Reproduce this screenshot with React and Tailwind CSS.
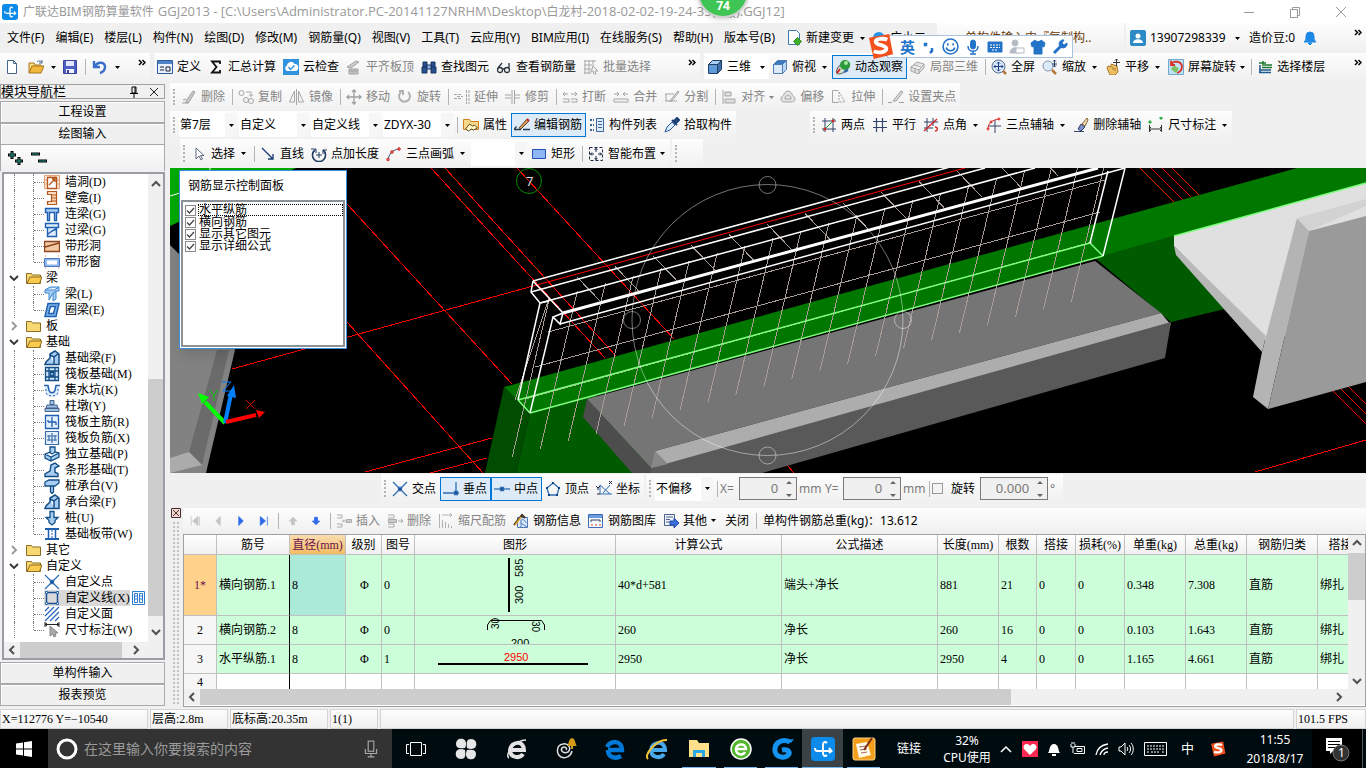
import { Fragment } from "react";

const strip = "bg-linear-to-b from-[#fdfdfd] to-[#f0f0f0]";

function Svg({ children, className = "h-4 w-4", box = "0 0 16 16" }) {
  return (
    <svg viewBox={box} className={`shrink-0 ${className}`} fill="none" stroke="currentColor" aria-hidden="true">
      {children}
    </svg>
  );
}

/* ---------- toolbar icons ---------- */

const icons = {
  newFile: <path d="M3.500 1.500h6l3 3v10h-9zM9.500 1.500v3h3" fill="#fff" stroke="#44648c" />,
  open: (
    <g stroke="#a9741c">
      <path d="M1 14V4h5l1 2h6v2" fill="#f8dd84" />
      <path d="M1 14l3-7h12l-3 7z" fill="#f2b93f" />
      <path d="M9 3c2-2 4-1 5 1M14 1v3h-3" stroke="#44648c" />
    </g>
  ),
  save: (
    <g>
      <path d="M1.500 1.500h13v13h-13z" fill="#4d5fc0" stroke="#38429b" />
      <path d="M4 2h8v5H4z" fill="#dfe6fb" stroke="none" />
      <path d="M4 10h8v4H4z" fill="#f4f4ff" stroke="none" />
      <path d="M5 11h2v3H5z" fill="#38429b" stroke="none" />
    </g>
  ),
  undo: <path d="M2 2v6h6M3 7c3-5 10-4 10 1 0 3-2 5-5 6" stroke="#3a6fc9" strokeWidth="2.400" />,
  define: (
    <g>
      <path d="M.5 1.500h15v13H.5z" fill="#e8f0fb" stroke="#2e5c9e" />
      <path d="M1 2h14v3H1z" fill="#4f82c8" stroke="none" />
      <path d="M3 8h4M3 11h4M9 8h4v4H9z" stroke="#223" />
    </g>
  ),
  sigma: <path d="M12 5V2.500H4L8.500 8 4 13.500h8V11" stroke="#111" strokeWidth="1.800" />,
  cloud: (
    <g>
      <path d="M0 0h16v16H0z" fill="#2f93dd" stroke="none" />
      <path d="M4 12a3 3 0 010-5.500A4 4 0 0111.500 5 3.500 3.500 0 0112 12z" fill="#fff" stroke="none" />
      <path d="M5.500 8l2 2.500 4-4" stroke="#2f93dd" strokeWidth="1.500" />
    </g>
  ),
  slab: <path d="M1 8l9-6 3 1-8 6zM3 10h9v5H3zM6 10v5M9 10v5M3 12h9" fill="#ccc" stroke="#a3a3a3" />,
  find: (
    <g fill="#28508f" stroke="#18355f">
      <path d="M2 3h4v5H2zM10 3h4v5h-4z" />
      <path d="M1 8h5v6H1zM10 8h5v6h-5z" />
      <path d="M6 6h4v4H6z" fill="#8db5e8" />
    </g>
  ),
  glasses: (
    <g stroke="#2a3542" strokeWidth="1.300">
      <circle cx="4" cy="11" r="2.500" />
      <circle cx="11" cy="11" r="2.500" />
      <path d="M6 10h3M2 9l4-5M13 10V4" />
    </g>
  ),
  batch: (
    <g stroke="#a8a8a8">
      <path d="M1 2h12M1 6h8M1 10h7M1 14h7M2 1v14M6 1v14M10 1v6" />
      <path d="M10 7l5 5h-3l1 3-2 0-1-3-2 1z" fill="#eee" />
    </g>
  ),
  cube: (
    <g stroke="#1f3c63">
      <path d="M1.500 5.500h9v9h-9z" fill="#5f9bd8" />
      <path d="M1.500 5.500l4-4h9l-4 4z" fill="#a9cdf0" />
      <path d="M10.500 14.500l4-4v-9l-4 4z" fill="#3c6ea8" />
    </g>
  ),
  topView: (
    <g stroke="#4d7db3">
      <path d="M1.500 5.500h9v9h-9z" fill="#dbe9f8" />
      <path d="M1.500 5.500l4-4h9l-4 4z" fill="#3d79bf" />
      <path d="M10.500 14.500l4-4v-9l-4 4z" fill="#b9d5f1" />
    </g>
  ),
  orbit: (
    <g>
      <ellipse cx="8" cy="9" rx="8" ry="4" transform="rotate(-40 8 9)" fill="#cfe2cf" stroke="#667" />
      <circle cx="10" cy="6" r="5" fill="#2c9a3c" stroke="none" />
      <circle cx="11" cy="4" r="2" fill="#a5e89a" stroke="none" />
      <path d="M2 14l3-4" stroke="#d22" strokeWidth="2" />
      <path d="M9 13l4-2" stroke="#2a60b0" strokeWidth="2" />
    </g>
  ),
  localCube: (
    <g stroke="#a5a5a5" fill="#e2e2e2">
      <path d="M1 8l6-5 7 2-5 6zM1 8v4l7 3 6-6V5M9 11v4M4 6l7 2M5 9v4" />
    </g>
  ),
  full: (
    <g>
      <circle cx="7.500" cy="7.500" r="6.500" fill="#d7e6f8" stroke="#5a6f8c" />
      <path d="M7.500 3v9M3 7.500h9M6 4.500L7.500 3 9 4.500M6 10.500L7.500 12 9 10.500M4.500 6L3 7.500 4.500 9M10.500 6L12 7.500 10.500 9" stroke="#1d3f8c" />
      <path d="M12 12l3 3" stroke="#b4793a" strokeWidth="2.500" />
    </g>
  ),
  zoom: (
    <g>
      <circle cx="6" cy="7" r="5" fill="#dcebf9" stroke="#8796a8" />
      <path d="M10 11l4 4" stroke="#b4793a" strokeWidth="2.500" />
      <path d="M12.500 1v7M11 2.500L12.500 1 14 2.500M10 5h5M11 6.500L12.500 8 14 6.500" stroke="#223a66" />
    </g>
  ),
  pan: (
    <g>
      <path d="M2 9l1-2 3 1V5l6 2 1 6-3 3H5z" fill="#edbe62" stroke="#a67a2c" />
      <path d="M11.500 0v7M8 3.500h7M10 1.500L11.500 0 13 1.500" stroke="#333" />
      <path d="M8 8v3M10 9v3" stroke="#a67a2c" />
    </g>
  ),
  rotateScreen: (
    <g>
      <path d="M.5.5h15v15H.5z" fill="#bfe2f5" stroke="#6fa8cc" />
      <path d="M3 10l3-4 5 4-3 4z" fill="#7cc35f" stroke="none" />
      <path d="M3 6c2-5 10-4 11 1 0 3-1 6-5 7M3 1.500V6h4" stroke="#d9342b" strokeWidth="1.800" />
    </g>
  ),
  floors: (
    <g strokeWidth="1.500">
      <path d="M2 4h7M6 2v3" stroke="#1c7a32" />
      <path d="M5 6h10M5 8.500h10" stroke="#1c7a32" />
      <path d="M2 11h12M2 13.500h12M3 6v8" stroke="#225a8c" />
    </g>
  ),
  brush: <path d="M1 14h7M5 12l7-10 2 1-6 10-3 1zM2 11l3-1" fill="#c9c9c9" stroke="#a0a0a0" />,
  copy: (
    <g stroke="#a5a5a5">
      <circle cx="3.500" cy="4" r="2.500" />
      <circle cx="8" cy="11" r="2.500" />
      <circle cx="13" cy="12" r="2.500" />
      <path d="M8 3h5v4M11 5.500l2 2 2-2" />
    </g>
  ),
  mirror: <path d="M5.500 2v11H.5zM9.500 2v11h5zM7.500 0v16" stroke="#a5a5a5" />,
  move: <path d="M8 1v14M1 8h14M6 3l2-2 2 2M6 13l2 2 2-2M3 6L1 8l2 2M13 6l2 2-2 2" stroke="#a0a0a0" strokeWidth="1.300" />,
  rotate: <path d="M4 3a5.500 5.500 0 107 0M2 2h4v4" stroke="#b0b0b0" strokeWidth="2" />,
  extend: <path d="M0 5.500h8M0 9.500h8M3 7.500h6M12.500 1v14M15 1v14" stroke="#a5a5a5" strokeDasharray="3 1" />,
  trim: <path d="M0 6h6M0 9h6M7 1v14M9.500 1v14M10 6h5M10 9h5" stroke="#a5a5a5" />,
  split: <path d="M1 5h5M9 5h6M3 3L1 5l2 2M13 3l2 2-2 2M1 10h6v3H1M9 10h6v3H9" stroke="#a5a5a5" />,
  merge: <path d="M1 5h5M10 5h5M4 3l2 2-2 2M12 3l-2 2 2 2M1 10h14v3H1z" stroke="#a5a5a5" />,
  divide: <path d="M1 5h9M1 12h12M2 5v7M5 13l9-11 1 1-8 10" fill="#ddd" stroke="#a5a5a5" />,
  align: <path d="M2 1v14M4 3h6v4H4zM4 10h10v4H4z" fill="#ddd" stroke="#a5a5a5" />,
  offset: <path d="M1 10c0-3 3-3 3-5 2-4 6-4 8 0 0 2 3 2 3 5s-3 3-5 3H5c-3 0-4-1-4-3zM5 9c0-3 5-4 6 0v1H5z" fill="#e4e4e4" stroke="#a5a5a5" />,
  stretch: (
    <g stroke="#a5a5a5">
      <path d="M7.500 13.500h-6v-12h6" />
      <path d="M8 3l6 10H8M8 3v10" strokeDasharray="2 1" />
    </g>
  ),
  grip: <path d="M0 13.500h4M11 13.500h5M5 12l8-10 2 1-7 9z" fill="#ddd" stroke="#a0a0a0" />,
  props: (
    <g>
      <path d="M.5 2.500h6l1 2h8v8H.5z" fill="#f8d88a" stroke="#cf7f1d" />
      <path d="M2.500 12l4-5 3 2 2-1 3 3-4 2-2-1-3 2z" fill="#fff4c0" stroke="#5b4a22" />
    </g>
  ),
  editBar: (
    <g>
      <path d="M0 12.500h7M9 12.500h7M0 12.500l2.500-3" stroke="#263b52" strokeWidth="1.300" />
      <path d="M5 11l8-9 2 2-8 8z" fill="#d89a5a" stroke="#6d4a2a" />
      <path d="M13 2l2 2" stroke="#c22" strokeWidth="2" />
    </g>
  ),
  list: (
    <g stroke="#3b6699">
      <path d="M1 3h4M1 8h4M1 13h4" strokeWidth="2" strokeDasharray="2 1" />
      <path d="M7.500 1.500h7v13h-7z" fill="#dcebfa" />
      <path d="M9 4.500h4M9 7.500h4M9 10.500h4" />
    </g>
  ),
  picker: (
    <g>
      <path d="M1 15l2-5 5-5 3 3-5 5z" fill="#d8eafc" stroke="#2a5c9c" />
      <path d="M8 3l5 5M10 4l3-3 2 2-3 3z" fill="#2a5c9c" stroke="#1b3f74" strokeWidth="2" />
    </g>
  ),
  twoPoint: (
    <g>
      <path d="M4 1v14M12 1v14M1 4h14M1 12h14" stroke="#33456b" />
      <path d="M2 14L14 2" stroke="#1c9a3c" />
      <path d="M3 11l2 2M11 3l2 2" stroke="#d22" strokeWidth="2" />
    </g>
  ),
  parallel: <path d="M4.500 1v14M10.500 1v14M1 4.500h14M1 10.500h14" stroke="#33456b" strokeWidth="1.200" />,
  angle: (
    <g>
      <path d="M4 1v14M1 5h14M1 11h9M10 1v8" stroke="#33456b" />
      <path d="M1 14L14 2M12 10c3 0 3 4 0 4" stroke="#d22" strokeWidth="1.300" />
    </g>
  ),
  threeAxis: (
    <g>
      <path d="M9 3v13M3 9h12" stroke="#33456b" />
      <path d="M2 12C2 6 6 3 13 2" stroke="#d22" />
      <circle cx="2" cy="12" r="1" stroke="#d22" />
      <circle cx="5" cy="5" r="1" stroke="#d22" />
      <circle cx="13" cy="2" r="1" stroke="#d22" />
    </g>
  ),
  eraseAxis: (
    <g>
      <path d="M1 14.500h10M5 12l3-5 4 3-4 4z" fill="#7d8fcc" stroke="#33456b" />
      <path d="M9 7l5-6 1 2-3 6z" fill="#f4e4c2" stroke="#7d5a2a" />
    </g>
  ),
  dim: (
    <g>
      <path d="M1.500 8v7M13.500 8v7M1 12h13M3 10l-2 2 2 2M12 10l2 2-2 2" stroke="#333" />
      <path d="M1 4h2v2H1zM12 0h2v2h-2z" fill="#2fae3f" stroke="#2fae3f" />
    </g>
  ),
  cursor: <path d="M5 2v11l3-3 2 4 1.500-1-2-3.500H13z" fill="#fff" stroke="#5c6b82" />,
  line: <path d="M2 2l11 11M13 8v5H8" stroke="#173a72" strokeWidth="1.300" />,
  addLen: (
    <g stroke="#223d66">
      <path d="M4 4a6.500 6.500 0 108 0" strokeWidth="1.600" />
      <path d="M8 6v6M5 9h6M0 3h5v4M12 8V4h4" />
    </g>
  ),
  arc: (
    <g>
      <path d="M2 14C3 8 6 4 13 3" stroke="#33456b" />
      <circle cx="2" cy="13.500" r="1.300" fill="#e66" stroke="#c33" />
      <circle cx="6" cy="6" r="1.300" fill="#e66" stroke="#c33" />
      <circle cx="13" cy="3" r="1.300" fill="#e66" stroke="#c33" />
    </g>
  ),
  rect: <path d="M1.500 3.500h13v9h-13z" fill="#8fb6f5" stroke="#2350b8" />,
  smart: (
    <g stroke="#1a2740">
      <path d="M1.500 1.500h13v13h-13z" strokeDasharray="3 2" />
      <path d="M8 2v4M8 10v4M2 8h4M10 8h4M6.500 4L8 2.500 9.500 4M6.500 12L8 13.500 9.500 12M4 6.500L2.500 8 4 9.500M12 6.500L13.500 8 12 9.500" />
    </g>
  ),
  cross: (
    <g stroke="#2f6eb5" strokeWidth="1.300">
      <path d="M1 1l14 14M15 1L1 15" />
      <path d="M6.500 6.500h3v3h-3z" fill="#14437f" />
    </g>
  ),
  perp: (
    <g stroke="#2f6eb5" strokeWidth="1.300">
      <path d="M0 12h16M13 1v12" />
      <path d="M11.500 10.500h3v3h-3z" fill="#14437f" />
    </g>
  ),
  mid: (
    <g stroke="#2f6eb5" strokeWidth="1.300">
      <path d="M0 8h16" />
      <path d="M6.500 6.500h3v3h-3z" fill="#14437f" />
    </g>
  ),
  vertex: (
    <g stroke="#2f6eb5" strokeWidth="1.300">
      <path d="M8 2l6 5-2 7H4L2 7z" />
      <path d="M7 1h2v2H7zM1 6h2v2H1zM13 6h2v2h-2zM3 13h2v2H3zM11 13h2v2h-2z" fill="#14437f" stroke="none" />
    </g>
  ),
  coord: (
    <g stroke="#2f6eb5">
      <path d="M4 4v9h12M4 4l10 9M14 4L7 12" />
      <path d="M0 5l2 2 2-2M2 7v2M13 0l3 3M16 0l-3 3M1 13h3" stroke="#223" />
    </g>
  ),
  insert: (
    <g stroke="#ababab">
      <path d="M1 2h5v3H1M1 11h5v3H1M7 8h3M8 6.500L6.500 8 8 9.500" />
      <path d="M10.500 6.500h5v3h-5z" fill="#ccc" />
    </g>
  ),
  remove: (
    <g stroke="#ababab">
      <path d="M1 2h6v3H1M1 11h6v3H1M11 8h5M14 6l2 2-2 2" />
      <path d="M1.500 6.500h8v3h-8z" fill="#ccc" />
    </g>
  ),
  scale: <path d="M1.500 1v14M4 2h10M12 0l2 2-2 2M4.500 7v8M7.500 9v6M10.500 11v4M13.500 13v2" stroke="#b3b3b3" />,
  barInfo: (
    <g>
      <path d="M4.500 4.500h10v10h-10z" fill="#dce9fb" stroke="#4a78bb" />
      <path d="M8 14V7c2-1 4 0 5 3M8 10l6 4" stroke="#4a78bb" />
      <path d="M1 12l8-10 3 3" stroke="#3e2a1c" strokeWidth="2" />
      <path d="M2 12l6-8" stroke="#e0a52e" strokeWidth="1.500" />
    </g>
  ),
  barLib: (
    <g>
      <path d="M.5 1.500h14v13H.5z" fill="#f4f8ff" stroke="#3d6cb4" />
      <path d="M1 2h13v3H1z" fill="#6c9be0" stroke="none" />
      <path d="M3 9V7h9v2" stroke="#345" />
      <path d="M3 12h2M7 12h2M11 12h2" stroke="#d85" strokeWidth="1.500" />
    </g>
  ),
  other: (
    <g>
      <path d="M1.500 1.500h10v11h-10z" fill="#eef3fb" stroke="#4c6288" />
      <path d="M3 4h7M3 6.500h4M3 9h4" stroke="#4c6288" />
      <path d="M7 8h4V5l5 5-5 5v-3H7z" fill="#3a6fe0" stroke="#234a9f" />
    </g>
  ),
  changeDoc: (
    <g>
      <path d="M2.500.5h8l3 3v11h-11z" fill="#fff" stroke="#3f79b5" />
      <path d="M11.500 7.500l4 4-4 4-4-4z" fill="#3fae2a" stroke="#2a8c1a" />
    </g>
  ),
};

function Icon({ name }) {
  return <Svg>{icons[name]}</Svg>;
}

function Arrow({ className = "w-3" }) {
  return (
    <span className={`flex shrink-0 justify-center ${className}`}>
      <svg viewBox="0 0 5 3" className="h-[3px] w-[5px] shrink-0" aria-hidden="true">
        <path d="M0 0h5L2.500 3z" fill="currentColor" />
      </svg>
    </span>
  );
}

function Grip() {
  return (
    <span className="flex w-2 shrink-0 justify-center self-stretch py-1.5">
      <span className="border-l-2 border-dotted border-[#b4b4b4]" />
    </span>
  );
}

function Sep() {
  return (
    <span className="flex w-1.5 shrink-0 justify-center">
      <span className="h-4 w-px bg-[#b4b4b4]" />
    </span>
  );
}

function Tool({ icon, label, off, active, menu, splitMenu }) {
  const tone = off ? "text-[#858585]" : "text-black";
  const frame = active ? "border-[#0078d7] bg-[#dcebf7]" : "border-transparent";
  return (
    <>
      <button type="button" disabled={off} className={`flex h-6 shrink-0 items-center gap-1 border pr-[3px] pl-0.5 whitespace-nowrap ${frame} ${tone}`}>
        <Icon name={icon} />
        {label}
      </button>
      {menu && <Arrow className={off ? "mr-1 w-1 text-[#858585]" : "mr-1 w-1"} />}
      {splitMenu && <Arrow className="mr-1 w-2" />}
    </>
  );
}

function Tools({ items }) {
  return items.map((item, i) => (item === "|" ? <Sep key={i} /> : <Tool key={i} {...item} />));
}

function Combo({ label, value, className }) {
  return (
    <span className={`relative mx-px flex h-6 shrink-0 items-center bg-white ${className}`}>
      <select aria-label={label} className="h-full w-full appearance-none bg-transparent pl-px outline-none">
        <option>{value}</option>
      </select>
      <span className="pointer-events-none absolute inset-y-0 right-0 flex w-3 items-center bg-[#f6f6f6]">
        <Arrow />
      </span>
    </span>
  );
}

function More() {
  return (
    <svg viewBox="0 0 8 7" className="mt-1.5 ml-auto h-[7px] w-2 shrink-0 self-start" fill="none" stroke="#000" strokeWidth="1.500" role="img" aria-label="更多">
      <path d="M1 1l2.500 2.500L1 6M4.500 1L7 3.500 4.500 6" />
    </svg>
  );
}

function GgjMark() {
  return (
    <>
      <rect width="24" height="24" rx="4" fill="#0d8bea" stroke="none" />
      <path d="M16 6c-2-2-4-1-4 2v8c0 3 2 4 4 2M4 11c0 3 1 3 4 3h12M18 11l2.500 3-2.500 2" stroke="#fff" strokeWidth="2" />
    </>
  );
}

function SogouLogo({ className }) {
  return (
    <Svg className={className} box="0 0 28 28">
      <path d="M2 5l21-4 4 21-20 5z" fill="#f4511e" stroke="none" />
      <path d="M21 7c-4-2-12-1-12 2 0 4 11 3 11 7 0 4-8 5-13 3" stroke="#fff" strokeWidth="4" />
    </Svg>
  );
}

/* ---------- title and menu ---------- */

function TitleBar() {
  return (
    <header className="flex h-[23px] items-center bg-white pl-0.5 text-[#999]">
      <Svg className="h-4 w-4" box="0 0 24 24"><GgjMark /></Svg>
      <h1 className="ml-[5px] whitespace-nowrap">
        广联达BIM钢筋算量软件
        <span className="ml-1 font-['Open_Sans','Noto_Sans_CJK_SC',sans-serif] text-[13px]">
          GGJ2013 - [C:\Users\Administrator.PC-20141127NRHM\Desktop\
        </span>
        白龙村
        <span className="font-['Open_Sans','Noto_Sans_CJK_SC',sans-serif] text-[13px]">-2018-02-02-19-24-35(2版).GGJ12]</span>
      </h1>
      <div className="ml-auto flex gap-[30px] pr-[17px]">
        <button type="button" aria-label="最小化">
          <Svg><path d="M3 8.500h10" /></Svg>
        </button>
        <button type="button" aria-label="还原">
          <Svg><path d="M3.500 5.500h7v8h-7zM5.500 5.500v-2h7v8h-2" /></Svg>
        </button>
        <button type="button" aria-label="关闭">
          <Svg><path d="M3 3l10 10M13 3L3 13" /></Svg>
        </button>
      </div>
    </header>
  );
}

const menus = [
  "文件(F)", "编辑(E)", "楼层(L)", "构件(N)", "绘图(D)", "修改(M)", "钢筋量(Q)", "视图(V)",
  "工具(T)", "云应用(Y)", "BIM应用(I)", "在线服务(S)", "帮助(H)", "版本号(B)",
];

function MenuBar() {
  return (
    <nav className="flex h-[30px] items-center">
      <div className="flex items-center gap-[11px] pl-[7px] whitespace-nowrap">
        {menus.map((m) => (
          <button type="button" key={m}>{m}</button>
        ))}
      </div>
      <div className="flex items-center pl-2">
        <Tool icon="changeDoc" label="新建变更" splitMenu />
        <Svg className="h-4 w-5" box="0 0 20 16">
          <path d="M3 14a4 4 0 010-7 6 6 0 0111-2 5 5 0 013 9z" fill="#2793e6" stroke="none" />
        </Svg>
        <span className="whitespace-nowrap">广小二</span>
      </div>
      <div className="ml-auto flex h-full w-[429px] shrink-0 gap-0.5">
        <div className={`flex w-[187px] items-center pl-7 whitespace-nowrap text-[#6a3906] ${strip}`}>单构件输入中『复制构..</div>
        <div className={`flex flex-1 items-center pr-1 pl-1 ${strip}`}>
          <Svg>
            <rect width="16" height="16" rx="2" fill="#2c8ac6" stroke="none" />
            <circle cx="8" cy="6" r="2.500" fill="#fff" stroke="none" />
            <path d="M3 13c0-5 10-5 10 0z" fill="#fff" stroke="none" />
          </Svg>
          <span className="ml-1 w-[81px]">13907298339</span>
          <Arrow />
          <span className="ml-1.5 w-[53px] whitespace-nowrap">造价豆:0</span>
          <Svg>
            <path d="M2 12c2-2 2-3 2-6a4 4 0 018 0c0 3 0 4 2 6zM6 13h4l-2 2z" fill="#1e88e5" stroke="#1e88e5" />
          </Svg>
          <More />
        </div>
      </div>
    </nav>
  );
}

function ImeBar() {
  return (
    <div className="absolute top-[33px] left-[866px] z-20 flex items-center">
      <SogouLogo className="z-10 h-[27px] w-[29px]" />
      <div className="-ml-2 flex h-[23px] w-[186px] items-center justify-between border border-[#a9c3de] bg-white pr-1 pl-3 text-[#2373c8]">
        <b className="text-[15px] leading-5">英</b>
        <Svg><path d="M4 5h1v1H4zM11 9v3l-2 2" strokeWidth="2.500" /></Svg>
        <Svg className="h-[17px] w-[17px]"><circle cx="8" cy="8" r="7" strokeWidth="1.500" /><path d="M5.500 5v2M10.500 5v2M4 9c1 4 7 4 8 0" strokeWidth="1.500" /></Svg>
        <Svg><rect x="5.500" y="1" width="5" height="9" rx="2.500" fill="currentColor" /><path d="M3 7c0 7 10 7 10 0M8 12v3M5 15h6" strokeWidth="1.500" /></Svg>
        <Svg><path d="M1 3h14v10H1z" fill="currentColor" /><path d="M3 6h10M3 8.500h10M5 11h6" stroke="#fff" strokeDasharray="2 1" /></Svg>
        <Svg className="h-4 w-4 text-[#b5bcc6]"><circle cx="6" cy="4" r="3" fill="currentColor" /><path d="M1 14c0-7 10-7 10 0z" fill="currentColor" /><path d="M7 9h8v5H7z" fill="#fff" /></Svg>
        <Svg><path d="M5 1L1 4l1 4 2-1v8h8V7l2 1 1-4-4-3c-1 2-5 2-6 0z" fill="currentColor" /></Svg>
        <Svg><path d="M2 14l7-7" strokeWidth="3" /><path d="M15 4a4 4 0 11-3-3l-2 3 2 2z" fill="currentColor" /></Svg>
      </div>
    </div>
  );
}

/* ---------- main toolbar ---------- */

const mainTools = [
  { icon: "define", label: "定义" },
  { icon: "sigma", label: "汇总计算" },
  { icon: "cloud", label: "云检查" },
  { icon: "slab", label: "平齐板顶", off: true },
  { icon: "find", label: "查找图元" },
  { icon: "glasses", label: "查看钢筋量" },
  { icon: "batch", label: "批量选择", off: true },
];

const viewTools = [
  { icon: "topView", label: "俯视", splitMenu: true },
  { icon: "orbit", label: "动态观察", active: true },
  { icon: "localCube", label: "局部三维", off: true },
  "|",
  { icon: "full", label: "全屏" },
  { icon: "zoom", label: "缩放", splitMenu: true },
  { icon: "pan", label: "平移", splitMenu: true },
  { icon: "rotateScreen", label: "屏幕旋转", menu: true },
  "|",
  { icon: "floors", label: "选择楼层" },
];

function MainToolbar() {
  return (
    <div className="flex h-[30px] pb-0.5">
      <div className={`mr-1 flex w-[150px] shrink-0 items-center pr-1 ${strip}`}>
        <button type="button" aria-label="新建" className="flex w-6 justify-center"><Icon name="newFile" /></button>
        <button type="button" aria-label="打开" className="flex w-6 justify-center"><Icon name="open" /></button>
        <Arrow className="w-2.5" />
        <button type="button" aria-label="保存" className="flex w-6 justify-center"><Icon name="save" /></button>
        <Sep />
        <button type="button" aria-label="撤销" className="flex w-6 justify-center"><Icon name="undo" /></button>
        <Arrow className="w-2.5" />
        <More />
      </div>
      <div className={`mr-1 flex w-[546px] shrink-0 items-center pr-1 ${strip}`}>
        <Tools items={mainTools} />
        <More />
      </div>
      <div className={`flex min-w-0 flex-1 items-center pr-1 ${strip}`}>
        <span className="flex items-center bg-white">
          <Tool icon="cube" label="三维" />
          <Arrow className="w-3.5" />
        </span>
        <Tools items={viewTools} />
        <More />
      </div>
    </div>
  );
}

/* ---------- navigator ---------- */

const O = "#b5561c";
const B = "#1f5fb0";
const L = "#a8cdf2";

const treeIcons = {
  wallHole: <g><path d="M.5 1.500h15v13H.5zM1 6h14M1 10h14M6 1v14M11 1v14" fill="#fbe3cf" stroke="#e3a27a" /><path d="M3.500 3.500h9v11h-9zM5 11l6-6M8 5h3v3" fill="#fff" stroke={O} strokeWidth="1.300" /></g>,
  niche: <path d="M3.500 1.500h9v13h-9v-3h4v-7h-4zM8 5h4M8 8h4M8 11h4" fill="#fbdcc0" stroke={O} strokeWidth="1.200" />,
  lintel: <path d="M1.500 2.500h13v4h-2v8h-2v-8h-5v8h-2v-8h-2z" fill={L} stroke={B} strokeWidth="1.400" />,
  lintel2: <path d="M1.500 1.500h13v4h-13zM3.500 5.500h9v9h-9zM4 12l4-3 4-2" fill="#dcecfb" stroke={B} strokeWidth="1.400" />,
  stripHole: <path d="M.5 3.500h15v10H.5zM1 9l14-4" fill="#f3c9a4" stroke="#8a451b" strokeWidth="1.400" />,
  stripWin: <g><path d="M1.500 1v14M14.500 1v14" stroke="#f0b8a0" strokeDasharray="2 1" /><path d="M.5 4.500h15v8H.5z" fill="#8fb6ee" stroke="#4a76c2" /><path d="M3 6.500h10v4H3z" fill="#fff" stroke="none" /></g>,
  beam: <path d="M1 4l5-3h9v4h-3v8l-3 2V7L5 14V7H1zM9 7l3-2M1 4h9l5-3" fill={L} stroke="#3c8ad0" />,
  ring: <path d="M4 1.500h11l-3 13H1zM6.500 4.500h5l-2 7h-5z" fill="#7fb2ea" stroke={B} strokeWidth="1.500" fillRule="evenodd" />,
  footBeam: <path d="M1 14.500h14V4l-4-3-5 3v4l-4 4zM6 5l4 2v7M10 7l5-4" fill={L} stroke="#134e86" strokeWidth="1.500" />,
  raft: <path d="M1.500 1.500h13v13h-13zM1 5h14M1 11h14M5 1v14M11 1v14M6.500 6.500h3v3h-3z" fill="#cfe4f8" stroke="#134e86" strokeWidth="1.300" />,
  pit: <g><path d="M1 5l3-1 1 4c1 3 5 3 6 0l1-4 3 1v6c-2 5-12 5-14 0z" fill="#dcebfa" stroke="none" /><path d="M0 3.500h4l1 5c1 3 5 3 6 0l1-5h4" stroke={B} strokeWidth="1.500" /><path d="M2 7v4c2 4 10 4 12 0V7" stroke={B} strokeDasharray="2 2" /></g>,
  pier: <path d="M6 2.500h4v4H6zM3 7h10l1 3H2zM1 10.500h14v3H1z" fill="#9ebfe4" stroke="#41638b" />,
  mainBar: <path d="M1.500 1.500h13v13h-13zM8 3v10M4 8h8M4 6v2M12 8v3" fill="#e4f0fc" stroke={B} strokeWidth="1.300" />,
  negBar: <path d="M1.500 1.500h13v13h-13zM8 3v10M3 6h10M3 10h10M5 5v6M11 5v6" fill="#e4f0fc" stroke="#3c6ca9" strokeWidth="1.200" />,
  single: <path d="M1 8l5-2V1h5v5l4 1v4l-8 4-6-3zM1 8l6 3 8-4M7 11v4M6 6l2 2 3-2" fill={L} stroke="#134e86" strokeWidth="1.300" />,
  stripFoot: <path d="M1 14.500h13v-3l-3-1V6l4-2-4-3-4 2-1 6-5 3z" fill={L} stroke="#134e86" strokeWidth="1.400" />,
  cap: <path d="M1 4l4-2h10v3l-4 3H1zM6.500 8h3v6l-1.500 1.500L6.500 14z" fill={L} stroke="#134e86" strokeWidth="1.300" />,
  pile: <path d="M6 1.500h4v6h4l-3 3v2L8 15l-3-2.500v-2l-3-3h4z" fill={L} stroke="#134e86" strokeWidth="1.300" />,
  band: <g stroke={B}><path d="M1 3h14M1 13h14" strokeWidth="1.800" /><path d="M4.500 3v10M11.500 3v10" strokeWidth="1.500" /><path d="M8 4v8" strokeDasharray="2 1" /></g>,
  pt: icons.cross,
  ln: <g><path d="M3 2.500h10M3 13.500h10M2.500 3v10M13.500 3v10" stroke="#1c4f95" strokeWidth="1.500" /><path d="M1.500 1.500h2v2h-2zM12.500 1.500h2v2h-2zM1.500 12.500h2v2h-2zM12.500 12.500h2v2h-2z" fill="#fff" stroke="#2f6eb5" /></g>,
  area: <path d="M1 5l4-4M1 10l9-9M1 15L15 1M6 15l9-9M11 15l4-4" stroke="#2a66bd" strokeWidth="1.300" />,
  size: <g><path d="M1 0v5M15 0v5M1 2.500h14M3 1L1 2.500 3 4M13 1l2 1.500L13 4" stroke="#222" /><path d="M6 4v10l3-2 1 3 2-1-1-3h3z" fill="#aaa" stroke="#888" /></g>,
};

const tree = [
  ["wallHole", "墙洞(D)"], ["niche", "壁龛(I)"], ["lintel", "连梁(G)"], ["lintel2", "过梁(G)"],
  ["stripHole", "带形洞"], ["stripWin", "带形窗", "last"],
  ["open", "梁"], ["beam", "梁(L)"], ["ring", "圈梁(E)", "last"],
  ["shut", "板"],
  ["open", "基础"], ["footBeam", "基础梁(F)"], ["raft", "筏板基础(M)"], ["pit", "集水坑(K)"],
  ["pier", "柱墩(Y)"], ["mainBar", "筏板主筋(R)"], ["negBar", "筏板负筋(X)"], ["single", "独立基础(P)"],
  ["stripFoot", "条形基础(T)"], ["cap", "桩承台(V)"], ["footBeam", "承台梁(F)"], ["pile", "桩(U)"],
  ["band", "基础板带(W)", "last"],
  ["shut", "其它"],
  ["open", "自定义"], ["pt", "自定义点"], ["ln", "自定义线(X)", "picked"], ["area", "自定义面"],
  ["size", "尺寸标注(W)", "last"],
];

function Folder({ open, label }) {
  return (
    <li className="flex h-4 items-center pl-1">
      <Svg className="mr-1.5 h-3 w-3" box="0 0 12 12">
        <path d={open ? "M2 4l4 4 4-4" : "M4 2l4 4-4 4"} stroke={open ? "#333" : "#999"} strokeWidth="1.800" />
      </Svg>
      <Svg>
        <path d="M.5 13.500v-10h5l1 1.500h8v8.500z" fill="#f7d873" stroke="#8c6c20" />
        {open && <path d="M1 13.500L4 7h12l-2.500 6.500z" fill="#fbcb4d" stroke="#8c6c20" />}
      </Svg>
      <span className="ml-1">{label}</span>
    </li>
  );
}

function Leaf({ icon, label, mark }) {
  return (
    <li className="flex h-4 items-center">
      <span className="ml-2.5 w-[19px] self-stretch border-l border-dotted border-[#808080]" />
      <span className={`self-stretch border-l border-dotted border-[#808080] ${mark === "last" ? "mb-2" : ""}`} />
      <span className="w-2.5 border-t border-dotted border-[#808080]" />
      <span className={`flex h-4 items-center ${mark === "picked" ? "bg-[#d9d9d9]" : ""}`}>
        <Svg>{treeIcons[icon]}</Svg>
        <span className="ml-[5px] whitespace-nowrap">{label}</span>
      </span>
      {mark === "picked" && (
        <Svg className="ml-0.5 h-[14px] w-[13px]" box="0 0 13 14">
          <path d="M.5.5h12v13H.5z" fill="#fff" stroke="#2b7cd0" />
          <path d="M2.500 2.500h3v9h-3zM7.500 2.500h3v9h-3zM3 5h2M3 8h2M8 5h2M8 8h2" stroke="#2b7cd0" />
        </Svg>
      )}
    </li>
  );
}

function Chevron({ d, className = "h-3 w-3" }) {
  return <Svg className={className} box="0 0 12 12"><path d={d} stroke="#505050" strokeWidth="2" /></Svg>;
}

const up = "M2 8l4-4 4 4";
const down = "M2 4l4 4 4-4";
const left = "M8 2L4 6l4 4";
const right = "M4 2l4 4-4 4";

const navButton = "h-[22px] border border-[#a9a9a9] bg-[#f0f0f0] text-center shadow-[inset_1px_1px_0_#fff]";

function Navigator() {
  return (
    <aside className="flex w-[165px] shrink-0 flex-col font-['Liberation_Serif','Noto_Sans_CJK_SC',serif]">
      <div className="mt-px mb-0.5 flex h-[15px] items-center border border-[#a0a0a0] text-[13px]">
        <span className="flex-1">模块导航栏</span>
        <Svg className="mr-1 h-3 w-3" box="0 0 12 12"><path d="M4 1h4v6H4zM7 1v6M2 7.500h8M6 8v4" stroke="#000" /></Svg>
        <Svg className="mx-1 h-3 w-3" box="0 0 12 12"><path d="M2 2l8 8M10 2l-8 8" stroke="#222" /></Svg>
      </div>
      <button type="button" className={navButton}>工程设置</button>
      <button type="button" className={navButton}>绘图输入</button>
      <div className={`flex h-[26px] items-center gap-2 border-x border-[#a9a9a9] pl-1.5 ${strip}`}>
        <Svg className="h-4 w-4"><path d="M5 1v8M1 5h8M12 7v8M8 11h8" stroke="#000" strokeWidth="3" /><path d="M5 2v6M2 5h6M12 8v6M9 11h6" stroke="#2a9c8f" /></Svg>
        <Svg className="h-4 w-4"><path d="M0 4h9M7 11h9" stroke="#000" strokeWidth="3" /><path d="M1 4h7M8 11h7" stroke="#2a9c8f" /></Svg>
      </div>
      <div className="mt-px mb-0.5 ml-0.5 flex grow flex-col border-2 border-[#9a9da3] bg-white">
        <div className="flex h-[468px] grow">
          <ul className="min-w-0 flex-1 overflow-hidden">
            {tree.map(([icon, label, mark], i) =>
              icon === "open" || icon === "shut" ? (
                <Folder key={i} open={icon === "open"} label={label} />
              ) : (
                <Leaf key={i} icon={icon} label={label} mark={mark} />
              )
            )}
          </ul>
          <div className="flex w-[15px] shrink-0 flex-col items-center bg-[#f0f0f0] py-1">
            <Chevron d={up} />
            <span className="mt-[189px] h-[237px] w-full bg-[#cdcdcd]" />
            <span className="mt-auto"><Chevron d={down} /></span>
          </div>
        </div>
        <div className="flex h-4 items-center bg-[#f0f0f0] pl-0.5">
          <Chevron d={left} />
          <span className="mr-2 ml-0.5 h-full w-[102px] bg-[#cdcdcd]" />
          <Chevron d={right} />
        </div>
      </div>
      <button type="button" className={navButton}>单构件输入</button>
      <button type="button" className={`mb-0.5 ${navButton}`}>报表预览</button>
    </aside>
  );
}

/* ---------- drawing toolbars ---------- */

const off = true;
const modifyTools = [
  { icon: "brush", label: "删除", off }, "|",
  { icon: "copy", label: "复制", off }, { icon: "mirror", label: "镜像", off }, "|",
  { icon: "move", label: "移动", off }, { icon: "rotate", label: "旋转", off }, "|",
  { icon: "extend", label: "延伸", off }, { icon: "trim", label: "修剪", off }, "|",
  { icon: "split", label: "打断", off }, { icon: "merge", label: "合并", off }, { icon: "divide", label: "分割", off }, "|",
  { icon: "align", label: "对齐", off, menu: true }, { icon: "offset", label: "偏移", off }, { icon: "stretch", label: "拉伸", off }, "|",
  { icon: "grip", label: "设置夹点", off },
];

const memberTools = [
  { icon: "props", label: "属性" },
  { icon: "editBar", label: "编辑钢筋", active: true },
  { icon: "list", label: "构件列表" },
  { icon: "picker", label: "拾取构件" },
];

const axisTools = [
  { icon: "twoPoint", label: "两点" },
  { icon: "parallel", label: "平行" },
  { icon: "angle", label: "点角", splitMenu: true },
  { icon: "threeAxis", label: "三点辅轴", splitMenu: true },
  { icon: "eraseAxis", label: "删除辅轴" },
  { icon: "dim", label: "尺寸标注", splitMenu: true },
];

function DrawToolbars() {
  return (
    <>
      <div className="flex h-7">
        <div className={`flex items-center ${strip}`}>
          <Grip />
          <Tools items={modifyTools} />
        </div>
      </div>
      <div className="flex h-7">
        <div className={`flex items-center ${strip}`}>
          <Grip />
          <Combo label="楼层" value="第7层" className="w-[58px]" />
          <Combo label="构件类别" value="自定义" className="w-[70px]" />
          <Combo label="构件类型" value="自定义线" className="w-[70px]" />
          <Combo label="构件" value="ZDYX-30" className="w-[70px]" />
          <Sep />
          <Tools items={memberTools} />
        </div>
        <div className={`ml-[74px] flex items-center ${strip}`}>
          <Grip />
          <Tools items={axisTools} />
        </div>
      </div>
      <div className="flex h-[29px]">
        <div className={`ml-2.5 flex items-center pr-0.5 ${strip}`}>
          <Grip />
          <Tools items={[{ icon: "cursor", label: "选择", splitMenu: true }, "|", { icon: "line", label: "直线" }, { icon: "addLen", label: "点加长度" }, { icon: "arc", label: "三点画弧", splitMenu: true }]} />
          <Combo label="画弧方式" value="" className="w-14" />
          <Tools items={[{ icon: "rect", label: "矩形" }, "|", { icon: "smart", label: "智能布置", menu: true }]} />
        </div>
        <div className={`ml-0.5 flex w-[31px] items-center ${strip}`}>
          <Grip />
        </div>
      </div>
    </>
  );
}

/* ---------- 3D view ---------- */

const rods = Array.from({ length: 21 }, (_, i) => i);
const ties = Array.from({ length: 14 }, (_, i) => i);

function Scene() {
  return (
    <svg viewBox="170 168 1196 305" preserveAspectRatio="xMidYMid slice" className="h-[305px] w-full grow bg-black" fill="none" role="img" aria-label="三维视图">
      <path d="M170 168h126L170 226z" fill="#00a800" />
      <path d="M170 196l40-12V168" stroke="#fff" />
      <path d="M170 245l50 50 15 55-29 123h-36z" fill="#828282" />
      <path d="M217 350h12l-27 115-13-13z" fill="#6b6b6b" />
      <path d="M170 458l19-6 13 13-32 8z" fill="#ababab" />

      <g stroke="#f00" shapeRendering="crispEdges">
        <path d="M517 168l157 171M445 168l171 188M431 168l174 190M347 204l165 180M347 322l136 151M232 369L533 286M365 472L492 438M430 473l57-15M787 465l7 8" />
        <path d="M1140 168l50 50M1151 168l46 46M1162 168l40 40M1172 168l36 36M1320 378l46 46M1330 378l36 36M1340 378l26 26M1255 472l111-32" />
      </g>

      <path d="M504 387L1297 168h69v30L1190 232 1103 256 530 413z" fill="#007800" />
      <path d="M504 387l26 26-14 60h-31z" fill="#004c00" />
      <path d="M530 413l65-18 60 78H516z" fill="#005a00" />
      <path d="M1095 258l85-24 82 66-91 22z" fill="#005a00" />

      <path d="M587 399L1095 261l66 52L655 451l-4 17z" fill="#757575" />
      <path d="M587 399l64 69 4 5h-23l-49-56z" fill="#4d4d4d" />
      <path d="M655 451L1161 313l10 12L668 464l-17 4z" fill="#adadad" />
      <path d="M651 468l520-146-6 36L762 473H651z" fill="#595959" />
      <path d="M655 451l13 13-17 4z" fill="#888" />

      <path d="M1174 236l192-53v120l-98 40-94-97z" fill="#e0e0e0" />
      <path d="M1174 246l92 90-4 16-86-97z" fill="#b8b8b8" />
      <path d="M1297 218l12 13-41 178-15-12 9-45z" fill="#b4b4b4" />
      <path d="M1297 218l69-19v7l-57 25z" fill="#d2d2d2" />
      <path d="M1309 231l57-15v166l-98 27z" fill="#9a9a9a" />
      <path d="M1174 236l192-53" stroke="#7f7" strokeWidth="1.500" />

      <g stroke="#a89c96" shapeRendering="crispEdges">
        {rods.map((i) => (
          <path key={i} d={`M${549.5 + i * 27.95} ${298 - i * 7.5}L${512.3 + i * 27.95} ${456.7 - i * 7.75}`} />
        ))}
        {ties.map((i) => (
          <path key={i} d={`M${577 + i * 38} ${277 - i * 10.6}l25 26`} />
        ))}
        <path d="M548 332L1105 180M535 367L1100 212M525 399L1092 242M549 298L515 400" />
      </g>
      <g stroke="#7dff7d" strokeWidth="1.500">
        <path d="M518 400L1090 243M530 413L1103 256M518 400l12 13M1090 243l13 13" />
      </g>
      <path d="M533 286L965 168" stroke="#f00" />
      <g stroke="#fff" strokeWidth="1.500">
        <path d="M533 281L950 167M531 292L985 168M540 303L1035 168M560 324L1125 168" />
        <path d="M563 313L1098 168" strokeWidth="3" />
        <path d="M533 281l-2 11 9 11 9-2M533 281l30 32-3 11-7-7 10-4M540 303l-22 97M553 317l-23 96M1090 243l18-72M1103 256l22-88" />
      </g>

      <g stroke="#fff" strokeOpacity=".45">
        <circle cx="767.500" cy="320" r="135.500" />
        <circle cx="767.500" cy="185" r="8.500" />
        <circle cx="767.500" cy="455.500" r="8.500" />
        <circle cx="632" cy="320" r="8.500" />
        <circle cx="903" cy="320" r="8.500" />
      </g>
      <circle cx="529" cy="181" r="12.500" stroke="#008c00" />
      <text x="526" y="186" fill="#ddd" fontSize="13">7</text>

      <g strokeWidth="4">
        <path d="M225 423l-20-21" stroke="#0f0" />
        <path d="M198 393l11 4-7 7z" fill="#0f0" />
        <path d="M225 423l6-29" stroke="#0080ff" />
        <path d="M227 396l7-11 2 13z" fill="#0080ff" />
        <path d="M226 422l30-7" stroke="#f00" />
        <path d="M265 412l-9-2 3 8z" fill="#f00" />
      </g>
      <path d="M209 390l5 5 4-5M214 395v6" stroke="#0c0" />
      <path d="M222 382h9l-8 9h9" stroke="#0080ff" />
      <path d="M246 400l9 9M255 400l-9 9" stroke="#d00" />
    </svg>
  );
}

function RebarPanel() {
  return (
    <section className="absolute top-0.5 left-[9px] flex h-[179px] w-[168px] flex-col border border-[#3c8ee0] bg-white p-px shadow-lg">
      <h2 className="py-1.5 pl-[7px] leading-4">钢筋显示控制面板</h2>
      <div className="flex-1 border-2 border-[#8c9097] pt-0.5 pl-0.5 font-['Liberation_Serif','Noto_Sans_CJK_SC',serif]">
        {["水平纵筋", "横向钢筋", "显示其它图元", "显示详细公式"].map((name, i) => (
          <label key={name} className="flex h-3 items-center gap-0.5 leading-3">
            <input type="checkbox" defaultChecked className="peer h-[11px] w-[11px] shrink-0 appearance-none border border-[#8a8a8a] bg-white" />
            <svg viewBox="0 0 11 11" className="pointer-events-none -ml-[13px] h-[11px] w-[11px] shrink-0 opacity-0 peer-checked:opacity-100" aria-hidden="true">
              <path d="M2 5.500l2.500 2.500L9 3" fill="none" stroke="#444" strokeWidth="1.300" />
            </svg>
            <span className={i === 0 ? "flex-1 border border-dotted border-black leading-[10px]" : "pl-px"}>{name}</span>
          </label>
        ))}
      </div>
    </section>
  );
}

/* ---------- snap bar ---------- */

function NumberBox({ label, value, width }) {
  return (
    <span className={`flex h-[23px] shrink-0 items-center border border-[#7a7a7a] bg-[#f0f0f0] ${width}`}>
      <input type="text" aria-label={label} defaultValue={value} className="min-w-0 flex-1 bg-transparent pr-2 text-right text-[13px] text-[#7a7a7a] outline-none" />
      <svg viewBox="0 0 6 16" className="mr-1 h-4 w-1.5" aria-hidden="true">
        <path d="M0 3h6L3 0zM0 13h6l-3 3z" fill="#666" />
      </svg>
    </span>
  );
}

function SnapBar() {
  return (
    <div className="flex h-[34px] items-start pl-[211px]">
      <div className={`flex h-[29px] items-center ${strip}`}>
        <Grip />
        <Tool icon="cross" label="交点" />
        <Tool icon="perp" label="垂点" active />
        <Tool icon="mid" label="中点" active />
        <Tool icon="vertex" label="顶点" />
        <Tool icon="coord" label="坐标" />
      </div>
      <div className={`ml-0.5 flex h-[29px] items-center pr-2 text-[#7a7a7a] ${strip}`}>
        <Grip />
        <span className="text-black"><Combo label="偏移方式" value="不偏移" className="w-[58px]" /></span>
        <Sep />
        <span className="w-[19px] shrink-0">X=</span>
        <NumberBox label="X 偏移" value="0" width="w-[58px]" />
        <span className="w-7 shrink-0 pl-0.5">mm</span>
        <span className="w-[18px] shrink-0">Y=</span>
        <NumberBox label="Y 偏移" value="0" width="w-[58px]" />
        <span className="w-[25px] shrink-0 pl-0.5">mm</span>
        <Sep />
        <label className="flex w-12 shrink-0 items-center gap-2 text-black">
          <input type="checkbox" className="h-[11px] w-[11px] appearance-none border border-[#999] bg-[#f4f4f4]" />
          旋转
        </label>
        <NumberBox label="旋转角度" value="0.000" width="w-[68px]" />
        <span className="pl-0.5">°</span>
      </div>
    </div>
  );
}

/* ---------- rebar table ---------- */

const headers = ["", "筋号", "直径(mm)", "级别", "图号", "图形", "计算公式", "公式描述", "长度(mm)", "根数", "搭接", "损耗(%)", "单重(kg)", "总重(kg)", "钢筋归类", "搭接形式"];
const widths = [33, 73, 56, 36, 33, 201, 166, 156, 61, 38, 39, 49, 61, 61, 71, 70];

const rows = [
  ["1*", "横向钢筋.1", "8", "Φ", "0", "hook", "40*d+581", "端头+净长", "881", "21", "0", "0", "0.348", "7.308", "直筋", "绑扎"],
  ["2", "横向钢筋.2", "8", "Φ", "0", "tie", "260", "净长", "260", "16", "0", "0", "0.103", "1.643", "直筋", "绑扎"],
  ["3", "水平纵筋.1", "8", "Φ", "1", "bar", "2950", "净长", "2950", "4", "0", "0", "1.165", "4.661", "直筋", "绑扎"],
  ["4", "", "", "", "", "", "", "", "", "", "", "", "", "", "", ""],
];

const shapes = {
  hook: (
    <svg viewBox="0 0 200 60" className="block h-[60px] w-[200px] font-['Liberation_Sans',sans-serif]">
      <path d="M94 3v54" stroke="#000" strokeWidth="2" />
      <text transform="translate(108 49) rotate(-90)" fontSize="11">300</text>
      <text transform="translate(108 22) rotate(-90)" fontSize="11">585</text>
    </svg>
  ),
  tie: (
    <svg viewBox="0 0 200 28" className="block h-7 w-[200px] font-['Liberation_Sans',sans-serif]">
      <path d="M72.500 14V9l3-4.500h51l3 4.500v5" fill="none" stroke="#000" />
      <text transform="translate(84 13) rotate(-90)" fontSize="10">30</text>
      <text transform="translate(117 5) rotate(90)" fontSize="10">30</text>
      <text x="96" y="31" fontSize="11">200</text>
    </svg>
  ),
  bar: (
    <svg viewBox="0 0 200 28" className="block h-7 w-[200px] font-['Liberation_Sans',sans-serif]">
      <path d="M23 19h150" stroke="#000" strokeWidth="2" />
      <text x="89" y="16" fontSize="11" fill="#f00">2950</text>
    </svg>
  ),
};

function Cell({ row, col, value }) {
  const edge = col === 1 ? "border-r-black" : "border-r-[#c0c0c0]";
  if (col === 0) {
    return (
      <th scope="row" className={`border-r border-b border-[#c0c0c0] p-0 text-center font-normal ${row === 0 ? "bg-[#ffd28c] text-[#6b0f4f]" : "bg-[#f6f6f6]"}`}>
        {value}
      </th>
    );
  }
  const fill = row === 3 ? "bg-white" : row === 0 && col === 2 ? "bg-[#abead9]" : "bg-[#ccffd9]";
  return (
    <td className={`overflow-hidden border-r border-b border-b-[#c0c0c0] whitespace-nowrap ${edge} ${fill} ${col === 3 ? "text-center" : ""} ${col === 5 ? "p-0" : "py-0 pr-0 pl-0.5"}`}>
      {col === 5 ? shapes[value] : value}
    </td>
  );
}

function RebarTable() {
  return (
    <div className="flex h-[173px] flex-col border border-[#a0a0a0] bg-white font-['Liberation_Serif','Noto_Sans_CJK_SC',serif]">
      <div className="flex min-h-0 flex-1">
        <div className="h-[154px] min-w-0 flex-1 overflow-hidden">
          <table className="w-[1204px] table-fixed border-separate border-spacing-0 leading-4">
            <colgroup>
              {widths.map((w, i) => (
                <col key={i} style={{ width: w }} />
              ))}
            </colgroup>
            <thead>
              <tr className="h-5">
                {headers.map((h, i) => (
                  <th key={i} scope="col" className={`overflow-hidden border-r border-b border-[#c0c0c0] bg-linear-to-b p-0 font-normal whitespace-nowrap ${i === 2 ? "from-[#f9dcae] to-[#f2bd62] text-[#6b0f4f]" : "from-white to-[#f0f0f0]"}`}>
                    {h}
                  </th>
                ))}
              </tr>
            </thead>
            <tbody>
              {rows.map((cells, r) => (
                <tr key={r} className={r === 0 ? "h-[61px]" : r === 3 ? "h-4 leading-3" : "h-[29px]"}>
                  {cells.map((value, c) => (
                    <Cell key={c} row={r} col={c} value={value} />
                  ))}
                </tr>
              ))}
            </tbody>
          </table>
        </div>
        <div className="flex w-[17px] shrink-0 flex-col items-center bg-[#f0f0f0] py-0.5">
          <Chevron d={up} />
          <span className="mt-1 h-[47px] w-full bg-[#cdcdcd]" />
          <span className="mt-auto"><Chevron d={down} /></span>
        </div>
      </div>
      <div className="mb-px flex h-4 shrink-0 items-center bg-[#f0f0f0] pr-5 pl-0.5">
        <Chevron d={left} />
        <span className="ml-0.5 h-full w-[70%] bg-[#cdcdcd]" />
        <span className="ml-auto"><Chevron d={right} /></span>
      </div>
    </div>
  );
}

const nav = [
  ["首行", "M3 2v12M12 2L5 8l7 6zM14 2v12", "#c4c4c4"],
  ["上一行", "M11 2L5 8l6 6z", "#c4c4c4"],
  ["下一行", "M5 2l6 6-6 6z", "#2f6be8"],
  ["末行", "M3 2l7 6-7 6zM12.500 2v12", "#2f6be8"],
  ["上移", "M8 3l5 5h-3v5H6V8H3z", "#c4c4c4"],
  ["下移", "M8 13l5-5h-3V3H6v5H3z", "#2f6be8"],
];

function RebarEditor() {
  return (
    <div className="flex h-[200px]">
      <div className="flex w-[15px] shrink-0 flex-col items-center">
        <Svg className="h-2.5 w-2.5" box="0 0 10 10"><path d="M.5.5h9v9h-9zM2 2l6 6M8 2L2 8" stroke="#4a3030" fill="#f3d5d0" /></Svg>
        <span className="mt-1 mb-1 w-1.5 flex-1 border-x-2 border-dotted border-[#c2c2c2]" />
      </div>
      <div className="min-w-0 flex-1">
        <div className={`flex h-[26px] items-center pb-px ${strip}`}>
          {nav.map(([name, d, color], i) => (
            <Fragment key={name}>
              {i === 4 && <Sep />}
              <button type="button" aria-label={name} className="flex w-[23px] shrink-0 justify-center">
                <Svg className="h-3 w-3"><path d={d} fill={color} stroke={color} /></Svg>
              </button>
            </Fragment>
          ))}
          <Sep />
          <Tool icon="insert" label="插入" off />
          <Tool icon="remove" label="删除" off />
          <Tool icon="scale" label="缩尺配筋" off />
          <Tool icon="barInfo" label="钢筋信息" />
          <Tool icon="barLib" label="钢筋图库" />
          <Tool icon="other" label="其他" menu />
          <button type="button" className="mr-1 ml-1.5">关闭</button>
          <Sep />
          <span className="ml-1 whitespace-nowrap">单构件钢筋总重(kg)：13.612</span>
        </div>
        <RebarTable />
      </div>
    </div>
  );
}

/* ---------- status bar and taskbar ---------- */

function StatusBar() {
  const cell = `h-full truncate border border-[#d4d4d4] pl-px ${strip}`;
  return (
    <footer className="flex h-[21px] gap-0.5 pt-px font-['Liberation_Serif','Noto_Sans_CJK_SC',serif] leading-[18px]">
      <span className={`w-[148px] ${cell}`}>X=112776 Y=−10540</span>
      <span className={`w-[78px] ${cell}`}>层高:2.8m</span>
      <span className={`w-[98px] ${cell}`}>底标高:20.35m</span>
      <span className={`w-12 ${cell}`}>1(1)</span>
      <span className={`flex-1 ${cell}`} />
      <span className={`w-[70px] ${cell}`}>101.5 FPS</span>
    </footer>
  );
}

const apps = [
  ["四叶", "w-[51px]", "", <g key="a" fill="#e6e6e6" stroke="none"><path d="M11 11C5 12 2 11 2 7s3-6 7-5c3 1 4 5 2 9z" /><path d="M13 11c-1-6 0-9 4-9s6 3 5 7c-1 3-5 4-9 2z" /><path d="M13 13c6-1 9 0 9 4s-3 6-7 5c-3-1-4-5-2-9z" /><path d="M11 13c1 6 0 9-4 9s-6-3-5-7c1-3 5-4 9-2z" /></g>],
  ["浏览器", "w-[51px]", "", <g key="b" stroke="#e4e4e4" strokeWidth="4"><path d="M5 13h14c0-10-13-9-14 0 0 8 10 9 13 4" /><path d="M4 21C-1 18 10 3 21 3" strokeWidth="1.500" /></g>],
  ["搜索", "w-[49px]", "", <g key="c"><path d="M11 13c2-2-2-4-4-2-2 3 2 6 6 4 4-4 0-9-5-8-7 1-7 10-2 13 5 2 10-1 11-6" stroke="#ddd" strokeWidth="1.500" /><path d="M12 9c2-1 1-7 5-8 4 1 3 7 5 8zM16 9h2v3h-2z" fill="#d59a14" stroke="none" /></g>],
  ["Edge", "w-[45px]", "", <g key="d" stroke="#0078d7" strokeWidth="4.500"><path d="M6 13h14c0-10-11-10-15-3M6 13c0 8 8 9 13 6" /></g>],
  ["IE", "w-[42px]", "", <g key="e" stroke="#49a8ec" strokeWidth="4"><path d="M6 13h14c0-10-13-9-14 0 0 8 10 9 13 4" /><path d="M3 22C-2 18 12 2 22 3" stroke="#f4c430" strokeWidth="2" /></g>],
  ["文件资源管理器", "w-[42px]", "mx-1", <g key="f" stroke="none"><path d="M2 3h8l2 3h10v14H2z" fill="#ffe08a" /><path d="M6 20v-7h12v7h-3v-4H9v4z" fill="#2ba7e6" /></g>],
  ["360浏览器", "w-[41px]", "mx-1", <g key="g"><circle cx="12" cy="12" r="10" fill="#55b72d" stroke="#fff" strokeWidth="1.500" /><path d="M7 12h10c0-6-9-6-10 0 0 6 7 7 9 3" stroke="#fff" strokeWidth="2.500" /></g>],
  ["广联达", "w-[41px]", "mx-1", <g key="h"><path d="M20 5c-8-4-16 1-15 9 1 7 11 8 14 3 1-3-2-5-7-4" stroke="#1593f0" strokeWidth="5" /><path d="M18 3l6-1-3 4z" fill="#1593f0" stroke="none" /></g>],
  ["GGJ", "w-[41px] bg-[#3a4246]", "", <GgjMark key="i" />],
  ["写字板", "w-[41px]", "mx-1", <g key="j"><rect x="1" y="1" width="22" height="22" rx="2" fill="#f59e1b" stroke="#ffd68a" /><path d="M4 7l11-2 4 13-12 3z" fill="#fffbe8" stroke="none" /><path d="M7 10l7-1M8 13l7-1M9 16l6-1" stroke="#a66" /><path d="M12 13l8-12" stroke="#7c2d12" strokeWidth="2" /></g>],
];

function Taskbar() {
  return (
    <div className="flex h-10 items-center bg-[#000b10] text-white">
      <button type="button" aria-label="开始" className="flex h-full w-12 shrink-0 items-center justify-center bg-black">
        <Svg><path d="M0 2.500l7-1v6H0zM8 1.300L16 0v7.500H8zM0 8.500h7v6l-7-1zM8 8.500h8V16l-8-1.300z" fill="#fff" stroke="none" /></Svg>
      </button>
      <label className="flex h-full w-[344px] shrink-0 items-center bg-[#333] pr-3 pl-2">
        <Svg className="h-[22px] w-[22px]" box="0 0 22 22"><circle cx="11" cy="11" r="9" stroke="#fff" strokeWidth="3" /></Svg>
        <input type="text" placeholder="在这里输入你要搜索的内容" className="ml-1.5 min-w-0 flex-1 bg-transparent text-sm outline-none placeholder:text-[#9a9a9a]" />
        <Svg className="h-[18px] w-[18px]"><g stroke="#aaa"><rect x="5.500" y="1" width="5" height="9" /><path d="M3 8v4h10V8M8 12v3M5 15h6" /></g></Svg>
      </label>
      <button type="button" aria-label="任务视图" className="flex w-12 shrink-0 justify-center">
        <Svg className="h-5 w-5" box="0 0 20 20"><path d="M4.500 3.500h11v13h-11zM3 5.500H.5v9H3M17 5.500h2.500v9H17" /></Svg>
      </button>
      {apps.map(([name, width, inset, art], i) => (
        <button type="button" key={name} aria-label={name} className={`flex h-full shrink-0 flex-col items-center ${width}`}>
          <Svg className="mt-2 mb-auto h-6 w-6" box="0 0 24 24">{art}</Svg>
          {i > 4 && (
            <span className="flex self-stretch">
              <span className={`h-0.5 flex-1 bg-[#76b9ed] ${inset}`} />
            </span>
          )}
        </button>
      ))}
      <span className="ml-[13px] w-[46px] shrink-0 whitespace-nowrap">链接</span>
      <span className="w-12 shrink-0 text-center leading-[17px] whitespace-nowrap">32%<br />CPU使用</span>
      <div className="ml-auto flex h-full shrink-0 items-center">
        <Svg className="mx-1.5 h-3 w-3" box="0 0 12 12"><path d="M1 9l5-5 5 5" strokeWidth="1.500" /></Svg>
        <Svg className="mx-1 h-4 w-4"><path d="M0 0h16v16H0z" fill="#ff2850" stroke="none" /><path d="M8 14L2 8c-2-4 3-7 6-3 3-4 8-1 6 3z" fill="#fff" stroke="none" /></Svg>
        <Svg className="mx-1 h-4 w-4"><path d="M2 12c2-2 1-9 6-9s4 7 6 9zM6 13h4v2H6z" fill="#fff" stroke="none" /></Svg>
        <Svg className="mx-1 h-4 w-4"><path d="M5 5.500h9.500v7H4M7 7.500h5v3H7zM1 3v3h4V3M2 1v2M4 1v2M3 6v6" /></Svg>
        <Svg className="mx-1 h-4 w-4"><path d="M2 14C3 8 7 4 14 3M6 14c1-4 3-6 8-7M10 14c0-2 1-3 4-3" strokeWidth="1.300" /></Svg>
        <Svg className="mx-1 h-4 w-4"><path d="M1 6h2l4-4v12l-4-4H1zM9 6c1 1 1 3 0 4M11 4c2 2 2 6 0 8M13 2c3 3 3 9 0 12" /></Svg>
        <Svg className="mx-1.5 h-[15px] w-[23px]" box="0 0 23 15"><path d="M.5.5h22v13H.5z" /><path d="M3 4h17M3 7h17M3 10h2M7 10h9M18 10h2" strokeDasharray="2 1" /></Svg>
        <span className="mx-2 text-[13px]">中</span>
        <SogouLogo className="mx-2 h-4 w-4" />
        <span className="w-[78px] pr-1 pl-2 text-center leading-[19px]">11:55<br />2018/8/17</span>
        <span className="flex h-full w-[50px] items-center justify-center bg-black">
          <Svg className="h-[26px] w-[26px]" box="0 0 26 26">
            <path d="M2 2h16v13h-9l-3 3v-3H2z" fill="#fff" stroke="none" />
            <path d="M4 5.500h12M4 8.500h12M4 11.500h8" stroke="#000" />
            <circle cx="17" cy="17" r="8" fill="#333" stroke="#777" />
            <text x="14" y="21" fontSize="12" fill="#fff" stroke="none">1</text>
          </Svg>
        </span>
        <span className="mr-[3px] h-full w-px bg-[#555]" />
      </div>
    </div>
  );
}

export default function App() {
  return (
    <div className="relative flex min-h-screen flex-col overflow-hidden bg-[#f0f0f0] font-['Noto_Sans','Noto_Sans_CJK_SC',sans-serif] text-xs text-black">
      <TitleBar />
      <MenuBar />
      <MainToolbar />
      <div className="flex grow">
        <Navigator />
        <main className="ml-[5px] flex min-w-0 flex-1 flex-col">
          <DrawToolbars />
          <div className="relative flex grow">
            <Scene />
            <RebarPanel />
          </div>
          <SnapBar />
          <div className="-ml-0.5">
            <RebarEditor />
          </div>
        </main>
      </div>
      <StatusBar />
      <Taskbar />
      <ImeBar />
      <div className="absolute -top-[34px] left-[697px] z-20 flex h-[52px] w-[52px] items-end justify-center rounded-full border-2 border-[#d0d0d0] bg-[#3fc553] pb-0.5 leading-4 font-bold text-white shadow-md">
        74
      </div>
    </div>
  );
}
